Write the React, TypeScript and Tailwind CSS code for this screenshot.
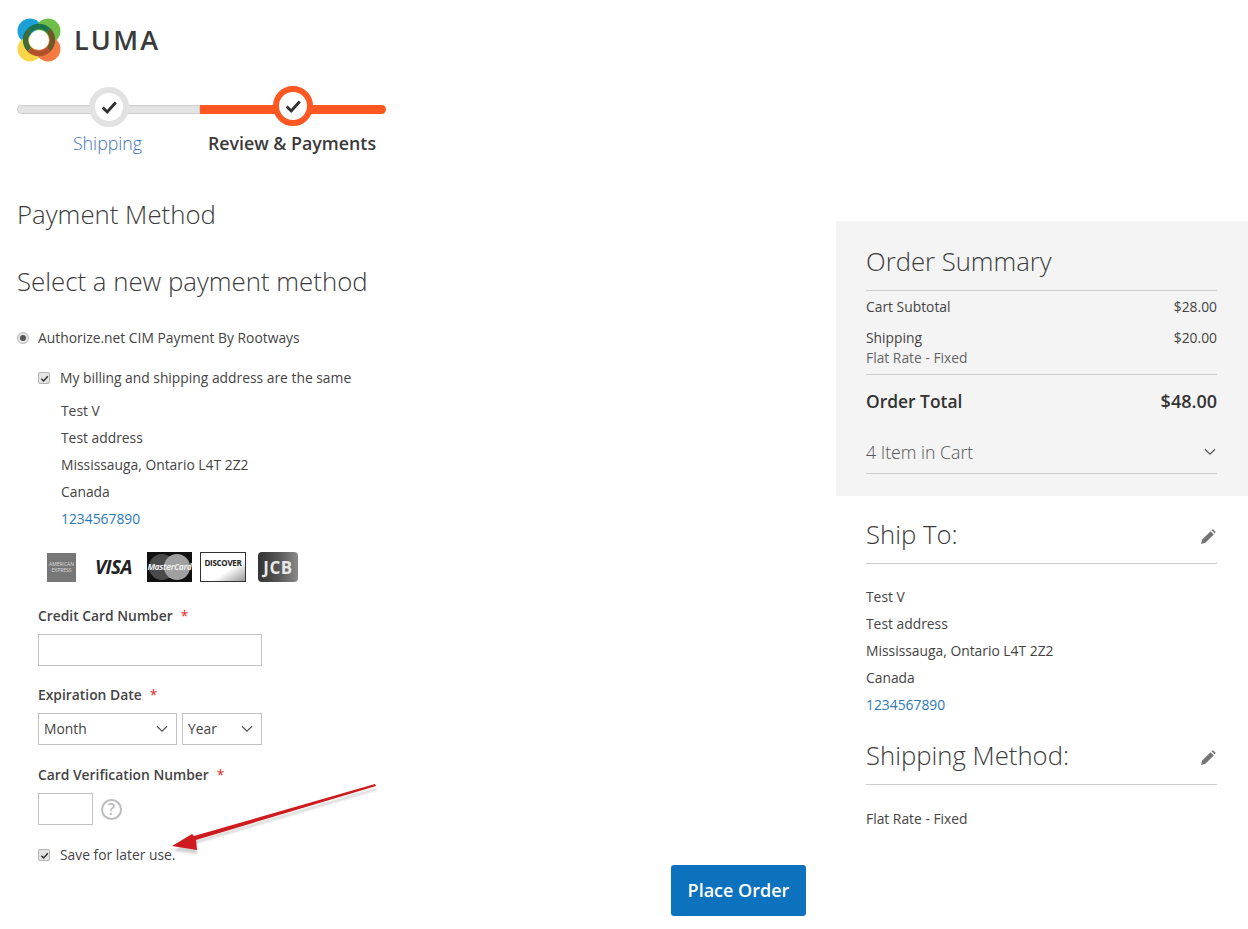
import React from "react";

const Check = ({ className = "" }: { className?: string }) => (
  <svg viewBox="0 0 20 20" className={className}>
    <path d="M3 10.5 L8 15.5 L17.5 5" fill="none" stroke="#2f2f2f" strokeWidth="3.2" />
  </svg>
);

const Chevron = ({ className = "" }: { className?: string }) => (
  <svg viewBox="0 0 12 8" className={className}>
    <path d="M1 1.2 L6 6.2 L11 1.2" fill="none" stroke="#555" strokeWidth="1.3" />
  </svg>
);

const Pencil = () => (
  <svg viewBox="0 0 16 16" className="w-[16px] h-[16px]">
    <path d="M1 15 L2.2 10.6 L10.6 2.2 L13.8 5.4 L5.4 13.8 Z" fill="#757575" />
    <path d="M11.6 1.2 L12.4 .6 Q13 .2 13.6 .7 L15.3 2.4 Q15.8 3 15.3 3.6 L14.8 4.4 Z" fill="#757575" />
  </svg>
);

const CheckBox = () => (
  <span className="w-[12px] h-[12px] rounded-[2px] bg-[#e4e4e4] border border-[#b5b5b5] flex items-center justify-center shrink-0">
    <Check className="w-[9px] h-[9px]" />
  </span>
);

const Logo = () => (
  <svg viewBox="0 0 44 44" className="w-[44px] h-[44px]">
    <circle cx="13" cy="13" r="12.5" fill="#1ba0d8" />
    <circle cx="31" cy="13" r="12.5" fill="#6fbe4a" />
    <circle cx="13" cy="31" r="12.5" fill="#f9d648" />
    <circle cx="31" cy="31" r="12.5" fill="#f47a42" />
    <path d="M12.5 12.5 A13.5 13.5 0 0 1 31.5 12.5" fill="none" stroke="#1c7450" strokeWidth="5.5" />
    <path d="M31.5 12.5 A13.5 13.5 0 0 1 31.5 31.5" fill="none" stroke="#6a5a2a" strokeWidth="5.5" />
    <path d="M31.5 31.5 A13.5 13.5 0 0 1 12.5 31.5" fill="none" stroke="#b1502a" strokeWidth="5.5" />
    <path d="M12.5 31.5 A13.5 13.5 0 0 1 12.5 12.5" fill="none" stroke="#3f6b3c" strokeWidth="5.5" />
    <circle cx="22" cy="22" r="10" fill="#fff" />
  </svg>
);

const Step = ({ label, active, bar, w }: { label: string; active?: boolean; bar: string; w: string }) => (
  <div className={`flex flex-col items-center ${w}`}>
    <div className={`relative w-full h-[9px] mt-[19px] ${bar}`}>
      <div
        className={`absolute left-1/2 top-[-19px] -translate-x-1/2 w-[40px] h-[40px] rounded-full bg-white border-[6px] flex items-center justify-center ${
          active ? "border-[#ff5722]" : "border-[#e2e2e2]"
        }`}
      >
        <Check className="w-[18px] h-[18px]" />
      </div>
    </div>
    <div className={`mt-[17px] pr-[2px] text-[17.8px] leading-[24px] ${active ? "font-semibold text-[#3a3a3a]" : "font-light text-[#3f74b5]"}`}>
      {label}
    </div>
  </div>
);

const Address = () => (
  <div className="flex flex-col text-[13.85px] leading-[27px] text-[#444]">
    <span>Test V</span>
    <span>Test address</span>
    <span>Mississauga, Ontario L4T 2Z2</span>
    <span>Canada</span>
    <span className="text-[#2a78b8]">1234567890</span>
  </div>
);

const Cards = () => (
  <div className="flex items-center h-[32px] mt-[19px] ml-[9px]">
    <div className="w-[29px] h-[29px] bg-[#777] flex flex-col items-center justify-center text-[5px] leading-[6px] text-[#ddd]">
      <span>AMERICAN</span>
      <span>EXPRESS</span>
    </div>
    <div className="ml-[19px] w-[40px] text-[19px] font-bold italic text-[#222] leading-none tracking-[-0.6px]">VISA</div>
    <div className="ml-[12px] w-[45px] h-[30px] bg-[#111] relative flex items-center justify-center overflow-hidden">
      <span className="absolute left-[2px] top-[2px] w-[26px] h-[26px] rounded-full bg-[#4a4a4a]" />
      <span className="absolute right-[2px] top-[2px] w-[26px] h-[26px] rounded-full bg-[#a0a0a0]" />
      <span className="relative text-[8.5px] font-bold italic text-[#eee] leading-none tracking-[-0.3px]">MasterCard</span>
    </div>
    <div className="ml-[8px] w-[46px] h-[30px] border border-[#333] bg-gradient-to-br from-white from-[62%] to-[#999] flex items-start justify-center pt-[6px] text-[8px] font-bold text-[#222] leading-none tracking-[-0.3px]">
      DISCOVER
    </div>
    <div className="ml-[12px] w-[40px] h-[30px] rounded-[4px] bg-gradient-to-r from-[#333] via-[#555] to-[#8a8a8a] flex items-center justify-center text-[17px] font-bold text-[#e8e8e8] leading-none tracking-[0.5px]">
      JCB
    </div>
  </div>
);

const Label = ({ text, className = "" }: { text: string; className?: string }) => (
  <div className={`text-[13.85px] leading-[20px] font-semibold text-[#444] ${className}`}>
    {text}
    <span className="text-[#e02b27] font-normal ml-[8px]">*</span>
  </div>
);

const Select = ({ label, w, chevLeft }: { label: string; w: string; chevLeft: string }) => (
  <div className={`h-[32px] border border-[#c2c2c2] bg-white flex items-center pl-[5px] text-[13.85px] text-[#444] ${w}`}>
    <span className={chevLeft}>{label}</span>
    <Chevron className="w-[12px] h-[8px]" />
  </div>
);

const Heading = ({ text }: { text: string }) => (
  <div className="flex items-center justify-between border-b border-[#ccc] h-[42px] pb-[7px] box-content">
    <span className="text-[25.7px] font-light leading-[36px] text-[#3c3c3c]">{text}</span>
    <span className="mr-[1px] mt-[3px]"><Pencil /></span>
  </div>
);

export default function App() {
  return (
    <div
      className="relative w-[1248px] h-[929px] overflow-hidden bg-white flex text-[#444]"
      style={{ fontFamily: '"Open Sans", "Noto Sans", sans-serif' }}
    >
      <main className="w-[836px] shrink-0 pl-[16px] pr-[30px] flex flex-col">
        <div className="flex items-center h-[44px] mt-[18px] ml-[1px]">
          <Logo />
          <span className="ml-[13px] pb-[2px] text-[27px] leading-none font-semibold tracking-[2.2px] text-[#3a3a3a]">LUMA</span>
        </div>

        <div className="flex mt-[24px] ml-[1px]">
          <Step label="Shipping" bar="bg-[#e4e4e4] border border-[#ccc] rounded-l-full" w="w-[183px]" />
          <Step label="Review & Payments" active bar="bg-[#ff5722] rounded-r-full" w="w-[186px]" />
        </div>

        <h2 className="mt-[41px] ml-[1px] text-[25.8px] leading-[36px] font-light text-[#3c3c3c]">Payment Method</h2>
        <h2 className="mt-[31px] ml-[1px] text-[25.8px] leading-[36px] font-light text-[#3c3c3c]">Select a new payment method</h2>

        <div className="flex items-center mt-[29px] h-[20px] ml-[1px]">
          <span className="w-[12px] h-[12px] rounded-full bg-[#e4e4e4] border border-[#bbb] flex items-center justify-center">
            <span className="w-[6px] h-[6px] rounded-full bg-[#555]" />
          </span>
          <span className="ml-[9px] text-[13.85px]">Authorize.net CIM Payment By Rootways</span>
        </div>

        <div className="pl-[22px]">
          <div className="flex items-center mt-[20px] h-[20px]">
            <CheckBox />
            <span className="ml-[10px] text-[13.85px]">My billing and shipping address are the same</span>
          </div>
          <div className="pl-[23px] mt-[9px]">
            <Address />
          </div>
          <Cards />
          <Label text="Credit Card Number" className="mt-[23px]" />
          <div className="w-[224px] h-[32px] border border-[#c2c2c2] mt-[8px]" />
          <Label text="Expiration Date" className="mt-[19px]" />
          <div className="flex gap-[5px] mt-[8px]">
            <Select label="Month" w="w-[139px]" chevLeft="w-[112px]" />
            <Select label="Year" w="w-[80px]" chevLeft="w-[53px]" />
          </div>
          <Label text="Card Verification Number" className="mt-[20px]" />
          <div className="flex items-center mt-[8px]">
            <div className="w-[55px] h-[32px] border border-[#c2c2c2]" />
            <div className="ml-[8px] w-[21px] h-[21px] rounded-full border-2 border-[#bbb] flex items-center justify-center text-[16px] leading-none font-semibold text-[#bbb]">?</div>
          </div>
          <div className="flex items-center mt-[20px] h-[20px]">
            <CheckBox />
            <span className="ml-[10px] text-[13.85px]">Save for later use.</span>
          </div>
        </div>

        <button className="self-end w-[135px] h-[51px] bg-[#0d72bd] rounded-[3px] text-white text-[18px] font-semibold">
          Place Order
        </button>
      </main>

      <aside className="w-[412px] shrink-0 mt-[221px]">
        <section className="bg-[#f4f4f4] h-[275px] pl-[30px] pr-[31px] pt-[23px]">
          <div className="text-[25.7px] font-light leading-[36px] text-[#3c3c3c] pb-[10px] border-b border-[#ccc]">Order Summary</div>
          <div className="flex justify-between text-[13.85px] leading-[20px] mt-[6px]">
            <span>Cart Subtotal</span>
            <span>$28.00</span>
          </div>
          <div className="flex justify-between text-[13.85px] leading-[20px] mt-[11px]">
            <span>Shipping</span>
            <span>$20.00</span>
          </div>
          <div className="text-[13.85px] leading-[20px] text-[#666] pb-[6px] border-b border-[#ccc]">Flat Rate - Fixed</div>
          <div className="flex justify-between items-center h-[24px] font-semibold mt-[14px] text-[#333]">
            <span className="text-[17.4px]">Order Total</span>
            <span className="text-[18px]">$48.00</span>
          </div>
          <div className="flex items-center justify-between border-b border-[#ccc] mt-[27px] pb-[9px]">
            <span className="text-[17.7px] leading-[24px] font-light text-[#555]">4 Item in Cart</span>
            <Chevron className="w-[12px] h-[8px] mr-[1px]" />
          </div>
        </section>

        <section className="pl-[30px] pr-[31px]">
          <div className="mt-[18px]"><Heading text="Ship To:" /></div>
          <div className="mt-[19px]"><Address /></div>
          <div className="mt-[17px]"><Heading text="Shipping Method:" /></div>
          <div className="mt-[24px] text-[13.85px] leading-[20px]">Flat Rate - Fixed</div>
        </section>
      </aside>

      <svg viewBox="0 0 1248 929" className="absolute inset-0 w-[1248px] h-[929px] pointer-events-none">
        <path d="M376 788 L196 841 L196 852 L172 849 L192 836 L197 838 L375 786 Z" fill="#808080" opacity="0.35" transform="translate(1 2)" className="blur-[1px]" />
        <path d="M376 786 L196 840 L197 850 L172 846 L192 834 L194 836 L375 784 Z" fill="#cf1a1e" />
      </svg>
    </div>
  );
}
